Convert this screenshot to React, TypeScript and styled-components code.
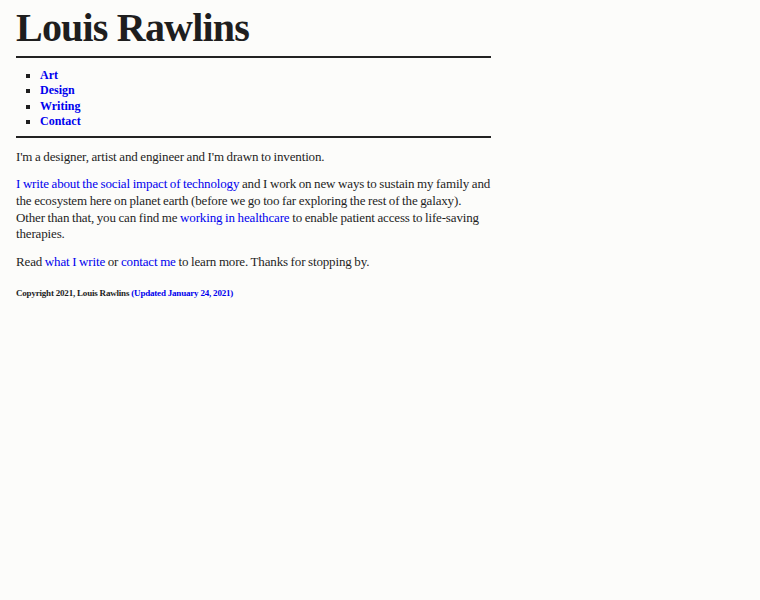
import React from "react";
import styled, { createGlobalStyle } from "styled-components";

const Global = createGlobalStyle`
  html, body { margin: 0; padding: 0; background: #fcfcfa; }
  body { font-family: "Liberation Serif", Georgia, serif; color: #1e1e1e; }
`;

const Page = styled.div`
  width: 475px;
  padding: 0 16px;
`;

const Title = styled.h1`
  font-size: 40px;
  font-weight: bold;
  margin: 0;
  padding: 8px 0 8px;
  line-height: 40px;
  letter-spacing: -0.8px;
`;

const Rule = styled.hr`
  border: 0;
  border-top: 2px solid #222;
  margin: 0;
`;

const Nav = styled.ul`
  list-style: square;
  margin: 10px 0 6px;
  padding-left: 24px;
  font-size: 12px;
  line-height: 15.4px;
  font-weight: bold;
`;

const Link = styled.a`
  color: #0000ee;
  text-decoration: none;
`;

const Para = styled.p`
  font-size: 13px;
  line-height: 16.7px;
  letter-spacing: -0.15px;
  word-spacing: -0.4px;
  margin: 11px 0;
`;

const Footer = styled.p`
  font-size: 9px;
  font-weight: bold;
  letter-spacing: -0.2px;
  margin: 17px 0;
`;

export default function App() {
  return (
    <>
      <Global />
      <Page>
        <Title>Louis Rawlins</Title>
        <Rule />
        <Nav>
          <li><Link href="#">Art</Link></li>
          <li><Link href="#">Design</Link></li>
          <li><Link href="#">Writing</Link></li>
          <li><Link href="#">Contact</Link></li>
        </Nav>
        <Rule />
        <Para>I'm a designer, artist and engineer and I'm drawn to invention.</Para>
        <Para>
          <Link href="#">I write about the social impact of technology</Link> and I work on new ways to sustain my family and the ecosystem here on planet earth (before we go too far exploring the rest of the galaxy). Other than that, you can find me <Link href="#">working in healthcare</Link> to enable patient access to life-saving therapies.
        </Para>
        <Para>
          Read <Link href="#">what I write</Link> or <Link href="#">contact me</Link> to learn more. Thanks for stopping by.
        </Para>
        <Footer>
          Copyright 2021, Louis Rawlins <Link href="#">(Updated January 24, 2021)</Link>
        </Footer>
      </Page>
    </>
  );
}
